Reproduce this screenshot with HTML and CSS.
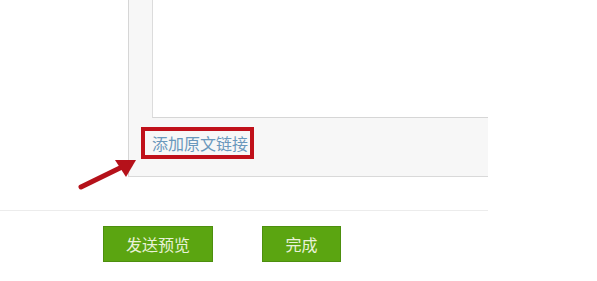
FILE: index.html
```html
<!DOCTYPE html>
<html lang="zh-CN">

<head>
    <meta charset="UTF-8">
    <title>编辑</title>
    <link rel="stylesheet" href="styles.css">
</head>

<body>
    <div class="page">
        <div class="editor">
            <div class="editor-body"></div>
            <div class="editor-foot">
                <a class="source-link">添加原文链接</a>
            </div>
        </div>
        <div class="actions">
            <button class="btn btn-preview">发送预览</button>
            <button class="btn btn-done">完成</button>
        </div>

        <!-- annotation arrow -->
        <svg class="arrow" width="70" height="40" viewBox="0 0 70 40">
            <line x1="9" y1="35" x2="50" y2="15" stroke="#b5111a" stroke-width="5" stroke-linecap="round" />
            <polygon points="64,8 43,8 54,25" fill="#b5111a" />
        </svg>
    </div>
</body>

</html>
```

FILE: styles.css
```css
body {
    margin: 0;
    padding: 0;
    background-color: #ffffff;
    font-family: "Noto Sans CJK SC", "Liberation Sans", sans-serif;
}

.page {
    position: relative;
    width: 488px;
    height: 281px;
}

.editor {
    margin-left: 128px;
    width: 359px;
    height: 176px;
    background-color: #f7f7f7;
    border-left: 1px solid #d6d6d6;
    border-bottom: 1px solid #d9d9d9;
}

.editor-body {
    margin-left: 23px;
    height: 117px;
    background-color: #ffffff;
    border-left: 1px solid #dcdcdc;
    border-bottom: 1px solid #d6d6d6;
}

.editor-foot {
    padding: 9px 0 0 12px;
}

.source-link {
    display: inline-block;
    box-sizing: border-box;
    width: 113px;
    height: 32px;
    padding-left: 7px;
    border: 4px solid #c0101a;
    color: #6a98bc;
    font-size: 16px;
    line-height: 24px;
    white-space: nowrap;
}

.actions {
    display: flex;
    gap: 49px;
    margin-top: 33px;
    padding: 15px 0 0 103px;
    border-top: 1px solid #ececec;
}

.btn {
    height: 36px;
    padding: 0;
    border: 1px solid #4d8f0e;
    background-color: #5ba511;
    color: #e9f2d9;
    font-family: "Noto Sans CJK SC", sans-serif;
    font-size: 16px;
}

.btn-preview {
    width: 110px;
}

.btn-done {
    width: 79px;
}

.arrow {
    position: absolute;
    left: 72px;
    top: 152px;
}
```
